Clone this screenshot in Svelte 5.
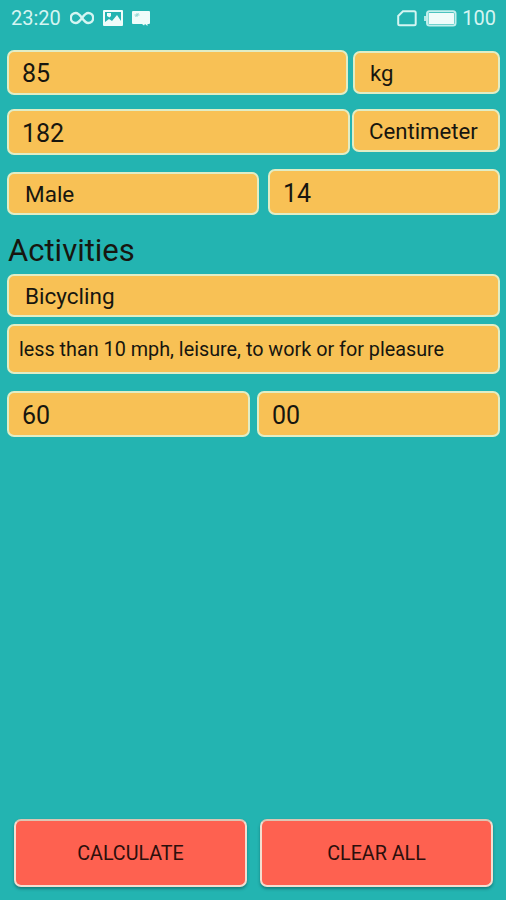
<script lang="ts">
  let weight = '85';
  let height = '182';
  let age = '14';
  let minutes = '60';
  let seconds = '00';
  const activity = 'Bicycling';
  const detail = 'less than 10 mph, leisure, to work or for pleasure';
</script>

<div class="screen">
  <header class="status">
    <span class="time">23:20</span>
    <svg class="loop" width="24" height="14" viewBox="0 0 24 14">
      <path d="M12 7C9.5 3.5 8.2 2 5.8 2a5 5 0 0 0 0 10C8.2 12 9.5 10.5 12 7s3.8-5 6.2-5a5 5 0 0 1 0 10C15.8 12 14.5 10.5 12 7Z" />
    </svg>
    <svg class="photo" width="20" height="16" viewBox="0 0 20 16">
      <path class="solid" fill-rule="evenodd" d="M1 0h18q1 0 1 1v14q0 1-1 1H1q-1 0-1-1V1q0-1 1-1ZM2 2v10l4-3 3 2 5-6 4 6V2Z" />
      <path class="solid" d="M4 3h4v3L6.5 7.5 4 6Z" />
    </svg>
    <svg class="card" width="18" height="15" viewBox="0 0 18 15">
      <path class="solid" d="M1 0h16q1 0 1 1v11q0 1-1 1h-1.500v2l-2.500-2-1 1.500-2-1.500H1q-1 0-1-1V1q0-1 1-1Z" />
      <path class="mark" d="M2.500 4h5M5 2v4M3.200 5.500l3.600-3" />
    </svg>
    <svg class="sim" width="20" height="17" viewBox="0 0 20 17">
      <path d="M6 1.200h11.200q1.500 0 1.500 1.500v11.100q0 1.500-1.500 1.500H2.700q-1.500 0-1.500-1.500V6Z" />
    </svg>
    <svg class="battery" width="33" height="17" viewBox="0 0 33 17">
      <path class="solid dim" d="M0 6h2v5H0z" />
      <rect class="case" x="3" y="1.200" width="28.500" height="14.400" rx="2.500" />
      <rect class="solid" x="4.500" y="3" width="25.500" height="11" rx=".5" />
    </svg>
    <span class="level">100</span>
  </header>

  <main>
    <div class="row weight">
      <div class="field number">{weight}</div>
      <div class="field unit">kg</div>
    </div>
    <div class="row height">
      <div class="field number">{height}</div>
      <div class="field unit">Centimeter</div>
    </div>
    <div class="row person">
      <div class="field choice">Male</div>
      <div class="field number">{age}</div>
    </div>
    <h1>Activities</h1>
    <div class="field choice">{activity}</div>
    <div class="field detail">{detail}</div>
    <div class="row duration">
      <div class="field number">{minutes}</div>
      <div class="field number">{seconds}</div>
    </div>
  </main>

  <footer>
    <button>CALCULATE</button>
    <button>CLEAR ALL</button>
  </footer>
</div>

<style>
  :global(body) { background: #23b4b1; }
  .screen {
    box-sizing: border-box;
    display: flex;
    flex-direction: column;
    height: 900px;
    background: #23b4b1;
    color: #17160f;
    font-family: Roboto, sans-serif;
  }

  .status { display: flex; align-items: center; height: 36px; padding: 0 10px 0 11px; color: #d5f5f2; font-size: 20px; }
  .status svg { flex: none; fill: none; stroke: #d5f5f2; stroke-width: 2; }
  .status .solid { fill: #effcfa; stroke: none; }
  .status .dim { fill: #b5e8e5; }
  .status .case { stroke: #c2efec; }
  .status .mark { stroke: #8fd6d2; stroke-width: 1; }
  .status .loop { margin-left: 9px; stroke-width: 2.4; }
  .photo { margin-left: 9px; }
  .card { margin-left: 9px; }
  .sim { margin-left: auto; }
  .battery { margin-left: 7px; }
  .level { margin-left: 5px; }

  main { flex: 1; padding: 14px 6px 0 7px; }
  .row { display: grid; }
  .weight { grid-template-columns: 341px 147px; justify-content: space-between; align-items: center; }
  .height { grid-template-columns: 343px 148px; justify-content: space-between; align-items: start; margin-top: 14px; }
  .person { grid-template-columns: 252px 232px; justify-content: space-between; align-items: end; margin-top: 14px; }
  .duration { grid-template-columns: 1fr 1fr; gap: 7px; margin-top: 17px; }

  .field {
    box-sizing: border-box;
    display: flex;
    align-items: center;
    height: 43px;
    padding: 0 16px;
    background: #f8c155;
    border: 2px solid #e1edc5;
    border-radius: 7px;
    font-size: 22.5px;
    white-space: nowrap;
  }
  .number { height: 46px; padding: 2px 13px 0; font-size: 25px; }
  .weight .number { height: 45px; }
  .unit { padding: 0 15px; font-size: 22.2px; }
  .detail { height: 50px; margin-top: 7px; padding: 0 10px; font-size: 19.8px; }
  h1 { height: 59px; margin: 0 0 0 1px; font-size: 31px; font-weight: 400; line-height: 71px; }

  footer { display: grid; grid-template-columns: 1fr 1fr; gap: 13px; padding: 0 13px 13px 14px; }
  button {
    height: 68px;
    padding: 0;
    background: #fe6150;
    border: 2px solid #f3ded0;
    border-top-color: #ddc5b3;
    border-radius: 7px;
    box-shadow: 0 2px 3px rgba(0, 50, 50, .4);
    color: #2c0f0c;
    font: 19.7px Roboto, sans-serif;
  }
</style>
